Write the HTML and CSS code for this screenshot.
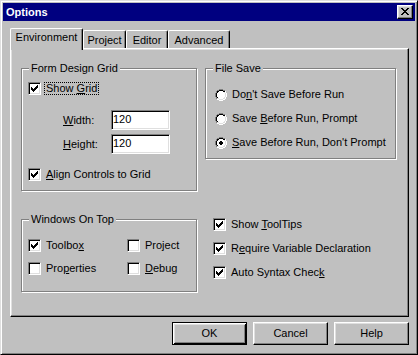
FILE: index.html
```html
<!DOCTYPE html>
<html lang="en">
  <head>
    <meta charset="UTF-8" />
    <meta name="viewport" content="width=device-width, initial-scale=1.0" />
    <title>Options</title>
    <link rel="stylesheet" href="styles.css">
  </head>
  <body>
    <div class="window">
      <div class="titlebar">
        <span class="title">Options</span>
        <button class="close">
          <svg width="8" height="7" viewBox="0 0 8 7" shape-rendering="crispEdges">
            <path d="M0 0h2v1H0z M6 0h2v1H6z M1 1h2v1H1z M5 1h2v1H5z M2 2h4v1H2z M3 3h2v1H3z M2 4h4v1H2z M1 5h2v1H1z M5 5h2v1H5z M0 6h2v1H0z M6 6h2v1H6z" fill="#000"/>
          </svg>
        </button>
      </div>

      <div class="tabs">
        <div class="tab active tab-env">Environment</div>
        <div class="tab tab-project">Project</div>
        <div class="tab tab-editor">Editor</div>
        <div class="tab tab-advanced">Advanced</div>
      </div>

      <div class="panel">
        <div class="group grid-box">
          <span class="caption">Form Design Grid</span>
          <div class="row">
            <span class="check"><svg class="tick" width="7" height="7" viewBox="0 0 7 7" shape-rendering="crispEdges"><path d="M6 0h1v1H6z M5 1h2v1H5z M0 2h1v1H0z M4 2h3v1H4z M0 3h2v1H0z M3 3h3v1H3z M0 4h5v1H0z M1 5h3v1H1z M2 6h1v1H2z"/></svg></span>
            <span class="label focus">Show <u>G</u>rid</span>
          </div>
          <div class="field first">
            <span class="field-label"><u>W</u>idth:</span>
            <span class="textbox">120</span>
          </div>
          <div class="field">
            <span class="field-label"><u>H</u>eight:</span>
            <span class="textbox">120</span>
          </div>
          <div class="row align-row">
            <span class="check"><svg class="tick" width="7" height="7" viewBox="0 0 7 7" shape-rendering="crispEdges"><path d="M6 0h1v1H6z M5 1h2v1H5z M0 2h1v1H0z M4 2h3v1H4z M0 3h2v1H0z M3 3h3v1H3z M0 4h5v1H0z M1 5h3v1H1z M2 6h1v1H2z"/></svg></span>
            <span class="label"><u>A</u>lign Controls to Grid</span>
          </div>
        </div>

        <div class="group save-box">
          <span class="caption">File Save</span>
          <div class="row">
            <svg class="radio" width="12" height="12" viewBox="0 0 12 12" shape-rendering="crispEdges">
              <path d="M4 2h4v1H4z M3 3h6v1H3z M2 4h8v4H2z M3 8h6v1H3z M4 9h4v1H4z" fill="#fff"/>
              <path d="M4 0h4v1H4z M2 1h2v1H2z M8 1h2v1H8z M1 2h1v2H1z M0 4h1v4H0z M1 8h1v2H1z" fill="#808080"/>
              <path d="M10 2h1v2h-1z M11 4h1v4h-1z M10 8h1v2h-1z M2 10h2v1H2z M8 10h2v1H8z M4 11h4v1H4z" fill="#fff"/>
              <path d="M4 1h4v1H4z M2 2h2v1H2z M8 2h2v1H8z M2 3h1v1H2z M1 4h1v4H1z M2 8h1v1H2z" fill="#000"/>
              <path d="M9 3h1v1H9z M10 4h1v4h-1z M9 8h1v1H9z M2 9h2v1H2z M8 9h2v1H8z M4 10h4v1H4z" fill="#dfdfdf"/>
            </svg>
            <span class="label">Do<u>n</u>'t Save Before Run</span>
          </div>
          <div class="row">
            <svg class="radio" width="12" height="12" viewBox="0 0 12 12" shape-rendering="crispEdges">
              <path d="M4 2h4v1H4z M3 3h6v1H3z M2 4h8v4H2z M3 8h6v1H3z M4 9h4v1H4z" fill="#fff"/>
              <path d="M4 0h4v1H4z M2 1h2v1H2z M8 1h2v1H8z M1 2h1v2H1z M0 4h1v4H0z M1 8h1v2H1z" fill="#808080"/>
              <path d="M10 2h1v2h-1z M11 4h1v4h-1z M10 8h1v2h-1z M2 10h2v1H2z M8 10h2v1H8z M4 11h4v1H4z" fill="#fff"/>
              <path d="M4 1h4v1H4z M2 2h2v1H2z M8 2h2v1H8z M2 3h1v1H2z M1 4h1v4H1z M2 8h1v1H2z" fill="#000"/>
              <path d="M9 3h1v1H9z M10 4h1v4h-1z M9 8h1v1H9z M2 9h2v1H2z M8 9h2v1H8z M4 10h4v1H4z" fill="#dfdfdf"/>
            </svg>
            <span class="label">Save <u>B</u>efore Run, Prompt</span>
          </div>
          <div class="row">
            <svg class="radio" width="12" height="12" viewBox="0 0 12 12" shape-rendering="crispEdges">
              <path d="M4 2h4v1H4z M3 3h6v1H3z M2 4h8v4H2z M3 8h6v1H3z M4 9h4v1H4z" fill="#fff"/>
              <path d="M4 0h4v1H4z M2 1h2v1H2z M8 1h2v1H8z M1 2h1v2H1z M0 4h1v4H0z M1 8h1v2H1z" fill="#808080"/>
              <path d="M10 2h1v2h-1z M11 4h1v4h-1z M10 8h1v2h-1z M2 10h2v1H2z M8 10h2v1H8z M4 11h4v1H4z" fill="#fff"/>
              <path d="M4 1h4v1H4z M2 2h2v1H2z M8 2h2v1H8z M2 3h1v1H2z M1 4h1v4H1z M2 8h1v1H2z" fill="#000"/>
              <path d="M9 3h1v1H9z M10 4h1v4h-1z M9 8h1v1H9z M2 9h2v1H2z M8 9h2v1H8z M4 10h4v1H4z" fill="#dfdfdf"/>
              <path d="M5 4h2v1H5z M4 5h4v2H4z M5 7h2v1H5z" fill="#000"/>
            </svg>
            <span class="label"><u>S</u>ave Before Run, Don't Prompt</span>
          </div>
        </div>

        <div class="group top-box">
          <span class="caption">Windows On Top</span>
          <div class="row">
            <span class="check"><svg class="tick" width="7" height="7" viewBox="0 0 7 7" shape-rendering="crispEdges"><path d="M6 0h1v1H6z M5 1h2v1H5z M0 2h1v1H0z M4 2h3v1H4z M0 3h2v1H0z M3 3h3v1H3z M0 4h5v1H0z M1 5h3v1H1z M2 6h1v1H2z"/></svg></span>
            <span class="label">Toolbo<u>x</u></span>
          </div>
          <div class="row">
            <span class="check"></span>
            <span class="label">Project</span>
          </div>
          <div class="row">
            <span class="check"></span>
            <span class="label">Pro<u>p</u>erties</span>
          </div>
          <div class="row">
            <span class="check"></span>
            <span class="label"><u>D</u>ebug</span>
          </div>
        </div>

        <div class="options-list">
          <div class="row">
            <span class="check"><svg class="tick" width="7" height="7" viewBox="0 0 7 7" shape-rendering="crispEdges"><path d="M6 0h1v1H6z M5 1h2v1H5z M0 2h1v1H0z M4 2h3v1H4z M0 3h2v1H0z M3 3h3v1H3z M0 4h5v1H0z M1 5h3v1H1z M2 6h1v1H2z"/></svg></span>
            <span class="label">Show <u>T</u>oolTips</span>
          </div>
          <div class="row">
            <span class="check"><svg class="tick" width="7" height="7" viewBox="0 0 7 7" shape-rendering="crispEdges"><path d="M6 0h1v1H6z M5 1h2v1H5z M0 2h1v1H0z M4 2h3v1H4z M0 3h2v1H0z M3 3h3v1H3z M0 4h5v1H0z M1 5h3v1H1z M2 6h1v1H2z"/></svg></span>
            <span class="label">R<u>e</u>quire Variable Declaration</span>
          </div>
          <div class="row">
            <span class="check"><svg class="tick" width="7" height="7" viewBox="0 0 7 7" shape-rendering="crispEdges"><path d="M6 0h1v1H6z M5 1h2v1H5z M0 2h1v1H0z M4 2h3v1H4z M0 3h2v1H0z M3 3h3v1H3z M0 4h5v1H0z M1 5h3v1H1z M2 6h1v1H2z"/></svg></span>
            <span class="label">Auto Syntax Chec<u>k</u></span>
          </div>
        </div>
      </div>

      <div class="buttons">
        <button class="btn default">OK</button>
        <button class="btn">Cancel</button>
        <button class="btn">Help</button>
      </div>
    </div>
  </body>
</html>
```

FILE: styles.css
```css
* {
  margin: 0;
  padding: 0;
  box-sizing: border-box;
}
body {
  background: #c0c0c0;
  font-family: "Liberation Sans", Arial, sans-serif;
  font-size: 11px;
  color: #000;
}
.window {
  width: 418px;
  height: 355px;
  padding: 2px;
  background: #c0c0c0;
  border: 1px solid;
  border-color: #dfdfdf #000 #000 #dfdfdf;
  box-shadow: inset 1px 1px #fff, inset -1px -1px #808080;
}

/* title bar */
.titlebar {
  display: flex;
  align-items: center;
  justify-content: space-between;
  height: 18px;
  padding: 0 2px 0 3px;
  background: #000080;
}
.title {
  color: #fff;
  font-weight: bold;
  line-height: 13px;
}
.close {
  display: flex;
  align-items: flex-start;
  width: 16px;
  height: 14px;
  padding: 2px 0 0 3px;
  background: #c0c0c0;
  border: 1px solid;
  border-color: #fff #000 #000 #fff;
  box-shadow: inset -1px -1px #808080, inset 1px 1px #dfdfdf;
}

/* tabs */
.tabs {
  display: flex;
  align-items: flex-end;
  height: 20px;
  margin: 7px 0 0 7px;
}
.tab {
  height: 18px;
  padding-top: 3px;
  line-height: 13px;
  text-align: center;
  background: #c0c0c0;
  border-top: 1px solid #fff;
  border-left: 1px solid #fff;
  border-right: 1px solid #000;
  border-radius: 2px 2px 0 0;
  box-shadow: inset -1px 0 #808080;
}
.tab.active {
  position: relative;
  z-index: 1;
  height: 22px;
  padding-top: 2px;
  margin-bottom: -2px;
}
.tab-env {
  width: 73px;
}
.tab-project {
  width: 43px;
}
.tab-editor {
  width: 42px;
}
.tab-advanced {
  width: 62px;
}

/* panel */
.panel {
  display: grid;
  grid-template-columns: 176px 191px;
  column-gap: 8px;
  row-gap: 28px;
  align-items: start;
  align-content: start;
  width: 399px;
  height: 269px;
  margin-left: 7px;
  padding: 19px 0 0 10px;
  border: 1px solid;
  border-color: #fff #000 #000 #fff;
  box-shadow: inset -1px -1px #808080, inset 1px 1px #dfdfdf;
}
.group {
  position: relative;
  border: 1px solid #808080;
  box-shadow: inset 1px 1px #fff, 1px 1px #fff;
}
.caption {
  position: absolute;
  top: -7px;
  left: 7px;
  padding: 0 2px;
  line-height: 13px;
  background: #c0c0c0;
}
.grid-box {
  height: 123px;
  padding: 13px 0 0 6px;
}
.save-box {
  display: flex;
  flex-direction: column;
  gap: 11px;
  height: 91px;
  padding: 19px 0 0 9px;
}
.top-box {
  display: grid;
  grid-template-columns: 99px auto;
  row-gap: 10px;
  align-content: start;
  height: 73px;
  padding: 19px 0 0 6px;
}
.options-list {
  display: flex;
  flex-direction: column;
  gap: 11px;
  margin-top: -1px;
  padding-left: 8px;
}

/* controls */
.row {
  display: flex;
  align-items: center;
  height: 13px;
}
.check {
  display: flex;
  align-items: center;
  justify-content: center;
  width: 13px;
  height: 13px;
  flex-shrink: 0;
  background: #fff;
  border: 1px solid;
  border-color: #808080 #fff #fff #808080;
  box-shadow: inset 1px 1px #000, inset -1px -1px #dfdfdf;
}
.radio {
  display: block;
  flex-shrink: 0;
}
.label {
  margin-left: 3px;
  padding: 0 1px;
  line-height: 11px;
  white-space: nowrap;
  border: 1px solid transparent;
}
.label.focus {
  border: 1px dotted #000;
}
.align-row {
  margin-top: 14px;
}
.field {
  display: flex;
  align-items: center;
  margin-top: 4px;
  padding-left: 35px;
}
.field.first {
  margin-top: 15px;
}
.field-label {
  width: 48px;
  line-height: 13px;
}
.textbox {
  width: 59px;
  height: 20px;
  padding: 2px 0 0 1px;
  line-height: 13px;
  background: #fff;
  border: 1px solid;
  border-color: #808080 #fff #fff #808080;
  box-shadow: inset 1px 1px #000, inset -1px -1px #dfdfdf;
}

/* buttons */
.buttons {
  display: flex;
  justify-content: flex-end;
  gap: 6px;
  width: 399px;
  margin: 5px 0 0 7px;
}
.btn {
  width: 75px;
  height: 23px;
  font-family: "Liberation Sans", Arial, sans-serif;
  font-size: 11px;
  line-height: 13px;
  color: #000;
  background: #c0c0c0;
  border: 1px solid;
  border-color: #fff #000 #000 #fff;
  box-shadow: inset -1px -1px #808080, inset 1px 1px #dfdfdf;
}
.btn.default {
  border-color: #000;
  box-shadow: inset 1px 1px #fff, inset -1px -1px #000, inset 2px 2px #dfdfdf, inset -2px -2px #808080;
}
```
